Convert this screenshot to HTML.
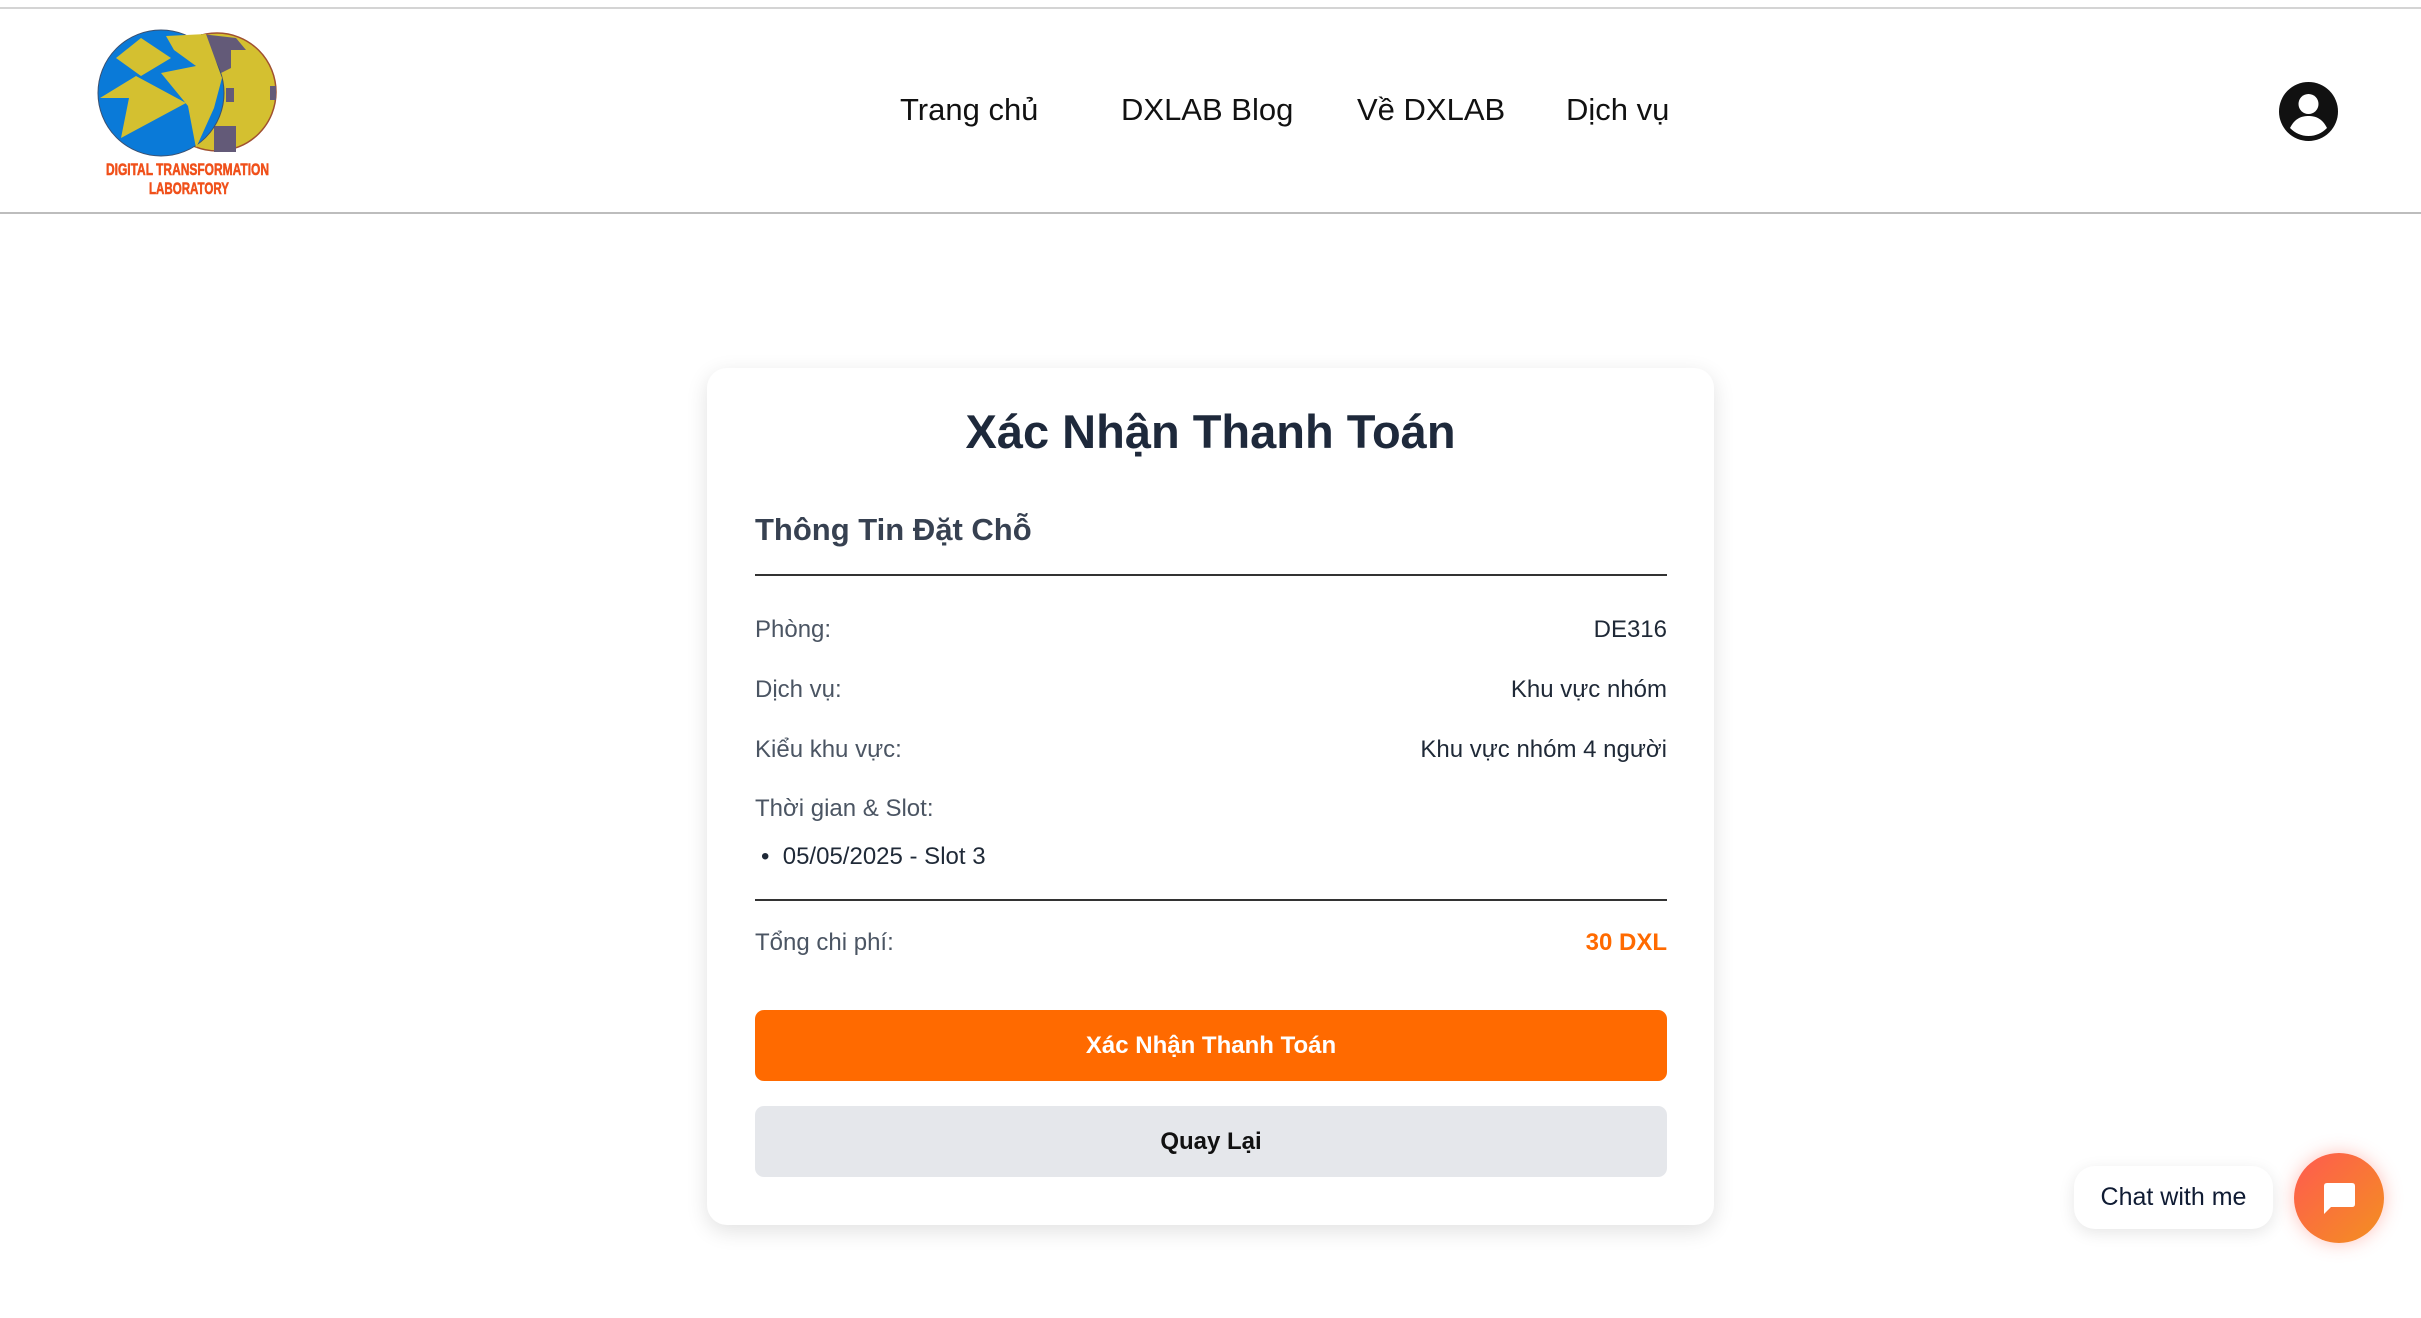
<!DOCTYPE html>
<html><head><meta charset="utf-8">
<style>
*{box-sizing:border-box;margin:0;padding:0}
html,body{width:2421px;height:1318px;background:#fff;overflow:hidden;font-family:"Liberation Sans",sans-serif}
.top{position:absolute;left:0;top:7px;width:2421px;height:2px;background:#d4d4d4}
.hdr{position:absolute;left:0;top:212px;width:2421px;height:2px;background:#bdbdbd}
.nav{position:absolute;top:92px;font-size:31px;color:#111;white-space:nowrap}
.card{position:absolute;left:707px;top:368px;width:1007px;height:857px;background:#fff;border-radius:20px;box-shadow:0 6px 22px rgba(0,0,0,.12)}
.title{position:absolute;left:0;width:100%;top:404px;text-align:center;font-size:47px;font-weight:bold;color:#1e293b}
.abs{position:absolute;white-space:nowrap}
.lab{left:755px;font-size:24px;color:#4b5563}
.val{right:754px;font-size:24px;color:#1f2937;text-align:right}
.line{position:absolute;left:755px;width:912px;height:2px;background:#333}
.btn{position:absolute;left:755px;width:912px;height:71px;border-radius:9px;text-align:center;line-height:71px;font-size:24px;font-weight:bold}
</style></head><body>
<div class="top"></div>
<svg style="position:absolute;left:96px;top:28px" width="190" height="172" viewBox="0 0 190 172">
<circle cx="121" cy="64" r="59" fill="#d4c030" stroke="#a05030" stroke-width="1.5"/>
<path d="M105 6 L140 10 L150 22 L135 22 L135 40 L125 45 L120 60 L105 60Z" fill="#635a78"/>
<path d="M118 98 L140 98 L140 124 L118 124Z" fill="#635a78"/>
<rect x="130" y="60" width="8" height="14" fill="#635a78"/>
<rect x="174" y="58" width="6" height="14" fill="#635a78"/>
<circle cx="65" cy="65" r="63" fill="#0a7ad8" stroke="#3b5070" stroke-width="1"/>
<path d="M20 30 L45 10 L75 30 L45 48Z" fill="#d4c030"/>
<path d="M4 70 L40 48 L90 75 L25 110 L33 70Z" fill="#d4c030"/>
<path d="M70 8 L110 6 L126 50 L118 80 L100 120 L92 78 L65 45 L100 38 L78 22Z" fill="#d4c030"/>
<text x="10" y="147" font-family="Liberation Sans" font-weight="bold" font-size="17" fill="#f0501a" textLength="163" lengthAdjust="spacingAndGlyphs" stroke="#f0501a" stroke-width="0.6">DIGITAL TRANSFORMATION</text>
<text x="53" y="166" font-family="Liberation Sans" font-weight="bold" font-size="17" fill="#f0501a" textLength="80" lengthAdjust="spacingAndGlyphs" stroke="#f0501a" stroke-width="0.6">LABORATORY</text>
</svg>
<div class="nav" style="left:900px">Trang chủ</div>
<div class="nav" style="left:1121px">DXLAB Blog</div>
<div class="nav" style="left:1357px">Về DXLAB</div>
<div class="nav" style="left:1566px">Dịch vụ</div>
<svg style="position:absolute;left:2279px;top:82px" width="59" height="59" viewBox="0 0 59 59">
<circle cx="29.5" cy="29.5" r="29.5" fill="#111"/>
<circle cx="29.5" cy="22" r="10" fill="#fff"/>
<path d="M11 46 C16 36 23 34 29.5 34 C36 34 43 36 48 46 C43 51 37 54 29.5 54 C22 54 16 51 11 46Z" fill="#fff"/>
</svg>
<div class="hdr"></div>
<div class="card"></div>
<div class="title">Xác Nhận Thanh Toán</div>
<div class="abs" style="left:755px;top:512px;font-size:31px;font-weight:bold;color:#374151">Thông Tin Đặt Chỗ</div>
<div class="line" style="top:574px"></div>
<div class="abs lab" style="top:616px">Phòng:</div><div class="abs val" style="top:616px">DE316</div>
<div class="abs lab" style="top:676px">Dịch vụ:</div><div class="abs val" style="top:676px">Khu vực nhóm</div>
<div class="abs lab" style="top:736px">Kiểu khu vực:</div><div class="abs val" style="top:736px">Khu vực nhóm 4 người</div>
<div class="abs lab" style="top:795px">Thời gian &amp; Slot:</div>
<div class="abs" style="left:761px;top:843px;font-size:24px;color:#1f2937">•&nbsp;&nbsp;05/05/2025 - Slot 3</div>
<div class="line" style="top:899px"></div>
<div class="abs lab" style="top:929px">Tổng chi phí:</div>
<div class="abs val" style="top:929px;color:#ff6a00;font-weight:bold">30 DXL</div>
<div class="btn" style="top:1010px;background:#ff6a00;color:#fff">Xác Nhận Thanh Toán</div>
<div class="btn" style="top:1106px;background:#e5e7eb;color:#111">Quay Lại</div>
<div class="abs" style="left:2074px;top:1166px;width:199px;height:63px;border-radius:21px;background:#fff;box-shadow:0 4px 16px rgba(0,0,0,.1);font-size:25px;color:#0f1b33;text-align:center;line-height:63px">Chat with me</div>
<div class="abs" style="left:2294px;top:1153px;width:90px;height:90px;border-radius:50%;background:linear-gradient(135deg,#ff5a50,#f39020);box-shadow:0 0 18px rgba(255,80,60,.35)">
<svg style="position:absolute;left:30px;top:30px" width="31" height="31" viewBox="0 0 31 31"><path d="M3 0 H28 Q31 0 31 3 V21 Q31 24 28 24 H7 L0 31 V3 Q0 0 3 0Z" fill="#fff"/></svg>
</div>
</body></html>
